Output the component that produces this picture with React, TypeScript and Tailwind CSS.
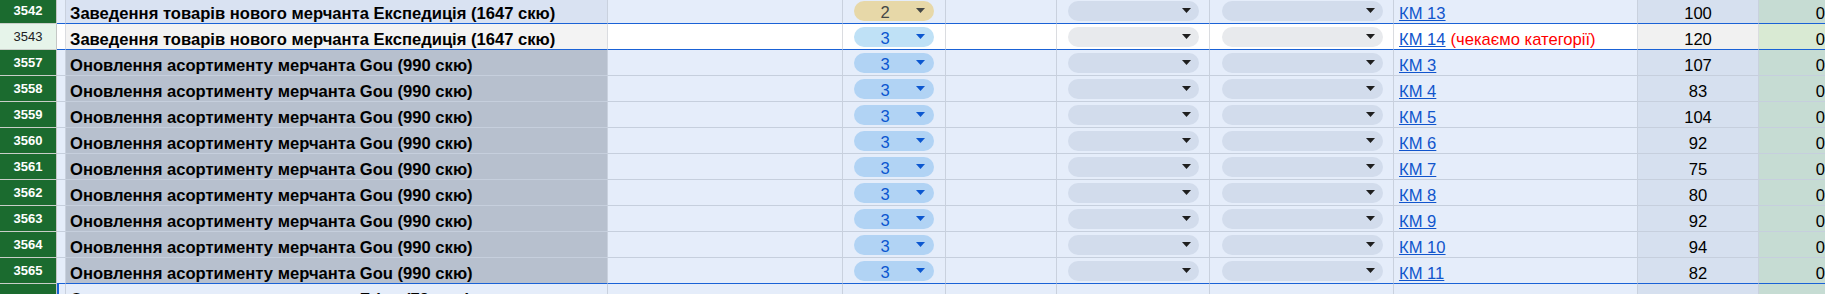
import React from "react";

type Kind = "top" | "sel" | "gou" | "next";

type Row = {
  num: string;
  title: string;
  kind: Kind;
  prio: string;
  link: string;
  note?: string;
  count: string;
  edge?: boolean;
};

const expedition = "Заведення товарів нового мерчанта Експедиція (1647 скю)";
const gou = "Оновлення асортименту мерчанта Gou (990 скю)";

const rows: Row[] = [
  { num: "3542", title: expedition, kind: "top", prio: "2", link: "КМ 13", count: "100" },
  { num: "3543", title: expedition, kind: "sel", prio: "3", link: "КМ 14", note: "(чекаємо категорії)", count: "120" },
  { num: "3557", title: gou, kind: "gou", prio: "3", link: "КМ 3", count: "107" },
  { num: "3558", title: gou, kind: "gou", prio: "3", link: "КМ 4", count: "83" },
  { num: "3559", title: gou, kind: "gou", prio: "3", link: "КМ 5", count: "104" },
  { num: "3560", title: gou, kind: "gou", prio: "3", link: "КМ 6", count: "92" },
  { num: "3561", title: gou, kind: "gou", prio: "3", link: "КМ 7", count: "75" },
  { num: "3562", title: gou, kind: "gou", prio: "3", link: "КМ 8", count: "80" },
  { num: "3563", title: gou, kind: "gou", prio: "3", link: "КМ 9", count: "92" },
  { num: "3564", title: gou, kind: "gou", prio: "3", link: "КМ 10", count: "94" },
  { num: "3565", title: gou, kind: "gou", prio: "3", link: "КМ 11", count: "82", edge: true },
  { num: "", title: "Оновлення асортименту мерчанта Friso (79 скю)", kind: "next", prio: "", link: "", count: "" },
];

const Arrow = ({ color }: { color: string }) => (
  <svg width="9" height="5" viewBox="0 0 9 5" className="shrink-0">
    <path d="M0 0h9L4.5 5z" fill={color} />
  </svg>
);

const SheetRow = ({ row }: { row: Row }) => {
  const sel = row.kind === "sel";
  const blue = row.kind === "top" || sel || row.edge;
  const bottom = blue ? "border-b-[#1a62d6]" : "border-b-[#c6cfdd]";
  const side = sel ? "border-r-[#dadce0]" : "border-r-[#c9d1de]";
  const cell = `h-full shrink-0 border-r border-b ${bottom} ${side}`;

  const pale = sel ? "bg-white" : "bg-[#e5edfa]";
  const titleBg =
    row.kind === "top" ? "bg-[#d9e2f2]" : sel ? "bg-[#f3f3f3]" : row.kind === "gou" ? "bg-[#b7c0ce]" : "bg-[#e5edfa]";
  const countBg = sel ? "bg-[#f1f1f1]" : "bg-[#d6e0ef]";
  const greenBg = sel ? "bg-[#d9ead3]" : "bg-[#c6dcd3]";

  const prioPill =
    row.prio === "2" ? "bg-[#e7d8a8] text-[#444746]" : sel ? "bg-[#bfe1f6] text-[#0b57d0]" : "bg-[#b1d3f4] text-[#0b57d0]";
  const prioArrow = row.prio === "2" ? "#444746" : "#0b57d0";
  const grayPill = sel ? "bg-[#e8eaed]" : "bg-[#d2dcec]";

  return (
    <div className="flex h-[26px]">
      <div
        className={`flex h-full w-[57px] shrink-0 items-center justify-center border-b border-r border-b-[#c9cec9] border-r-[#c4c7c5] text-[13px] ${
          sel ? "bg-[#e6f4ea] font-normal text-[#202124]" : "bg-[#1b6b2f] font-bold text-white"
        }`}
      >
        {row.num}
      </div>
      <div
        className={`${cell} w-[9px] ${pale} ${row.kind === "next" ? "border-l-2 border-l-[#1a62d6]" : ""}`}
      />
      <div
        className={`${cell} flex w-[542px] items-end overflow-hidden whitespace-nowrap pl-[4px] text-[16.6px] leading-[18px] font-bold text-black ${titleBg}`}
      >
        {row.title}
      </div>
      <div className={`${cell} w-[235px] ${pale}`} />
      <div className={`${cell} flex w-[103px] items-center pl-[11px] ${pale}`}>
        {row.prio && (
          <div className={`flex h-[20px] w-[80px] items-center rounded-full pr-[9px] text-[16.6px] ${prioPill}`}>
            <span className="flex-1 pt-[4px] text-center leading-[20px]">{row.prio}</span>
            <Arrow color={prioArrow} />
          </div>
        )}
      </div>
      <div className={`${cell} w-[111px] ${pale}`} />
      <div className={`${cell} flex w-[153px] items-center pl-[11px] pr-[10px] ${pale}`}>
        {row.kind !== "next" && (
          <div className={`flex h-[20px] flex-1 items-center justify-end rounded-full pr-[8px] ${grayPill}`}>
            <Arrow color="#1f1f1f" />
          </div>
        )}
      </div>
      <div className={`${cell} flex w-[184px] items-center pl-[12px] pr-[10px] ${pale}`}>
        {row.kind !== "next" && (
          <div className={`flex h-[20px] flex-1 items-center justify-end rounded-full pr-[8px] ${grayPill}`}>
            <Arrow color="#1f1f1f" />
          </div>
        )}
      </div>
      <div className={`${cell} flex w-[244px] items-end whitespace-nowrap pl-[5px] text-[16.6px] leading-[18px] ${pale}`}>
        <span className="text-[#1155cc] underline">{row.link}</span>
        {row.note && <span className="ml-[5px] text-[#ff0000]">{row.note}</span>}
      </div>
      <div className={`${cell} flex w-[121px] items-end justify-center text-[16.6px] leading-[18px] text-black ${countBg}`}>
        {row.count}
      </div>
      <div className={`${cell} flex w-[70px] items-end justify-end pr-[3px] text-[16.6px] leading-[18px] text-black ${greenBg}`}>
        {row.kind !== "next" ? "0" : ""}
      </div>
    </div>
  );
};

const App: React.FC = () => {
  return (
    <div className="h-[294px] w-[1825px] overflow-hidden bg-white font-['Liberation_Sans',Arial,sans-serif]">
      <div className="-mt-[2px]">
        {rows.map((row, index) => (
          <SheetRow key={index} row={row} />
        ))}
      </div>
    </div>
  );
};

export default App;
